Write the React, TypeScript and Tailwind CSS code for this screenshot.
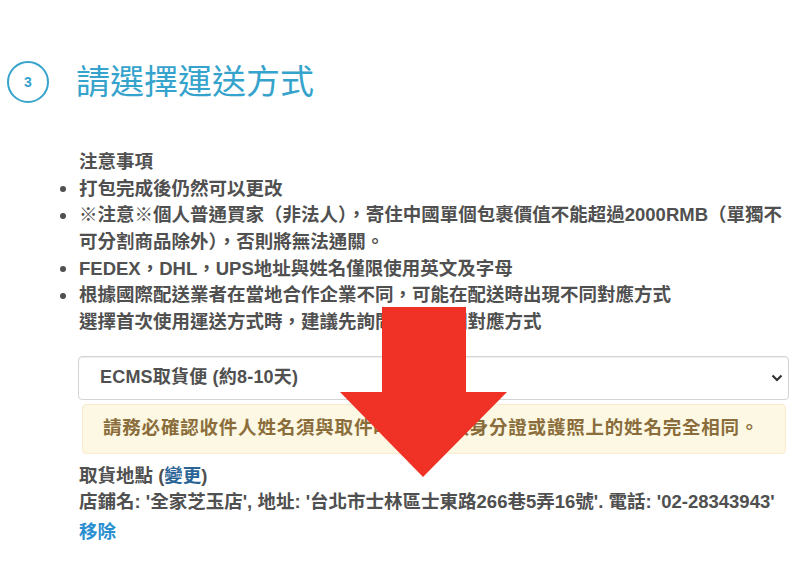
import React from 'react';

const notes: React.ReactNode[] = [
    '打包完成後仍然可以更改',
    <>
        ※注意※個人普通買家（非法人），寄住中國單個包裹價值不能超過2000RMB（單獨不
        <br />
        可分割商品除外），否則將無法通關。
    </>,
    'FEDEX，DHL，UPS地址與姓名僅限使用英文及字母',
    <>
        根據國際配送業者在當地合作企業不同，可能在配送時出現不同對應方式
        <br />
        選擇首次使用運送方式時，建議先詢問是否有相對應方式
    </>,
];

const ArrowOverlay: React.FC = () => (
    <svg
        className="absolute inset-0 pointer-events-none"
        width="800"
        height="564"
        viewBox="0 0 800 564"
    >
        <polygon
            points="382,307 466,307 466,392 507,392 423,477 340,392 382,392"
            fill="#f03226"
        />
    </svg>
);

export default function App() {
    return (
        <div className="relative w-[800px] h-[564px] bg-white overflow-hidden font-['Liberation_Sans','Noto_Sans_CJK_TC',sans-serif] text-[#505050]">
            {/* Step header */}
            <div className="flex items-center gap-[27px] pt-[61px] pl-[7px]">
                <div className="w-[42px] h-[42px] rounded-full border-2 border-[#35a3cc] flex items-center justify-center text-[14px] font-bold text-[#35a3cc]">
                    3
                </div>
                <h1 className="text-[34px] leading-[42px] font-normal text-[#35a3cc]">請選擇運送方式</h1>
            </div>

            {/* Notes */}
            <div className="mt-[46px] pl-[60px] text-[18.5px] leading-[26.67px] font-bold whitespace-nowrap">
                <div className="pl-[19px]">注意事項</div>
                <ul>
                    {notes.map((note, i) => (
                        <li key={i} className="flex">
                            <span className="w-[19px] h-[26.67px] shrink-0 flex items-center">
                                <span className="w-[6px] h-[6px] rounded-full bg-[#505050]" />
                            </span>
                            <span>{note}</span>
                        </li>
                    ))}
                </ul>

                {/* Shipping select */}
                <div className="mt-[20px] ml-[18px] w-[711px] h-[44px] border border-[#d4d4d4] rounded-[4px] shadow-[inset_0_1px_1px_rgba(0,0,0,0.075)] flex items-center justify-between pl-[21px] pr-[5px]">
                    <span className="text-[18px] tracking-[0.2px]">ECMS取貨便 (約8-10天)</span>
                    <svg width="12" height="8" viewBox="0 0 12 8" fill="none">
                        <path d="M1.5 1.5l4.5 4.5 4.5-4.5" stroke="#333" strokeWidth="2.2" />
                    </svg>
                </div>

                {/* Warning */}
                <div className="mt-[4px] ml-[22px] w-[704px] h-[50px] bg-[#fcf8e3] border border-[#faebcc] rounded-[4px] flex items-center pl-[20px] text-[#8a6d3b] tracking-[0.8px]">
                    請務必確認收件人姓名須與取件時出示有效身分證或護照上的姓名完全相同。
                </div>

                {/* Pickup store */}
                <div className="mt-[9px] pl-[19px]">
                    取貨地點 (<a className="text-[#2a6496]">變更</a>)
                </div>
                <div className="mt-[0px] pl-[19px] text-[18.5px]">
                    店鋪名: '全家芝玉店', 地址: '台北市士林區士東路266巷5弄16號'. 電話: '02-28343943'
                </div>
                <div className="mt-[3px] pl-[19px]">
                    <a className="text-[#2a8fd0]">移除</a>
                </div>
            </div>

            <ArrowOverlay />
        </div>
    );
}
